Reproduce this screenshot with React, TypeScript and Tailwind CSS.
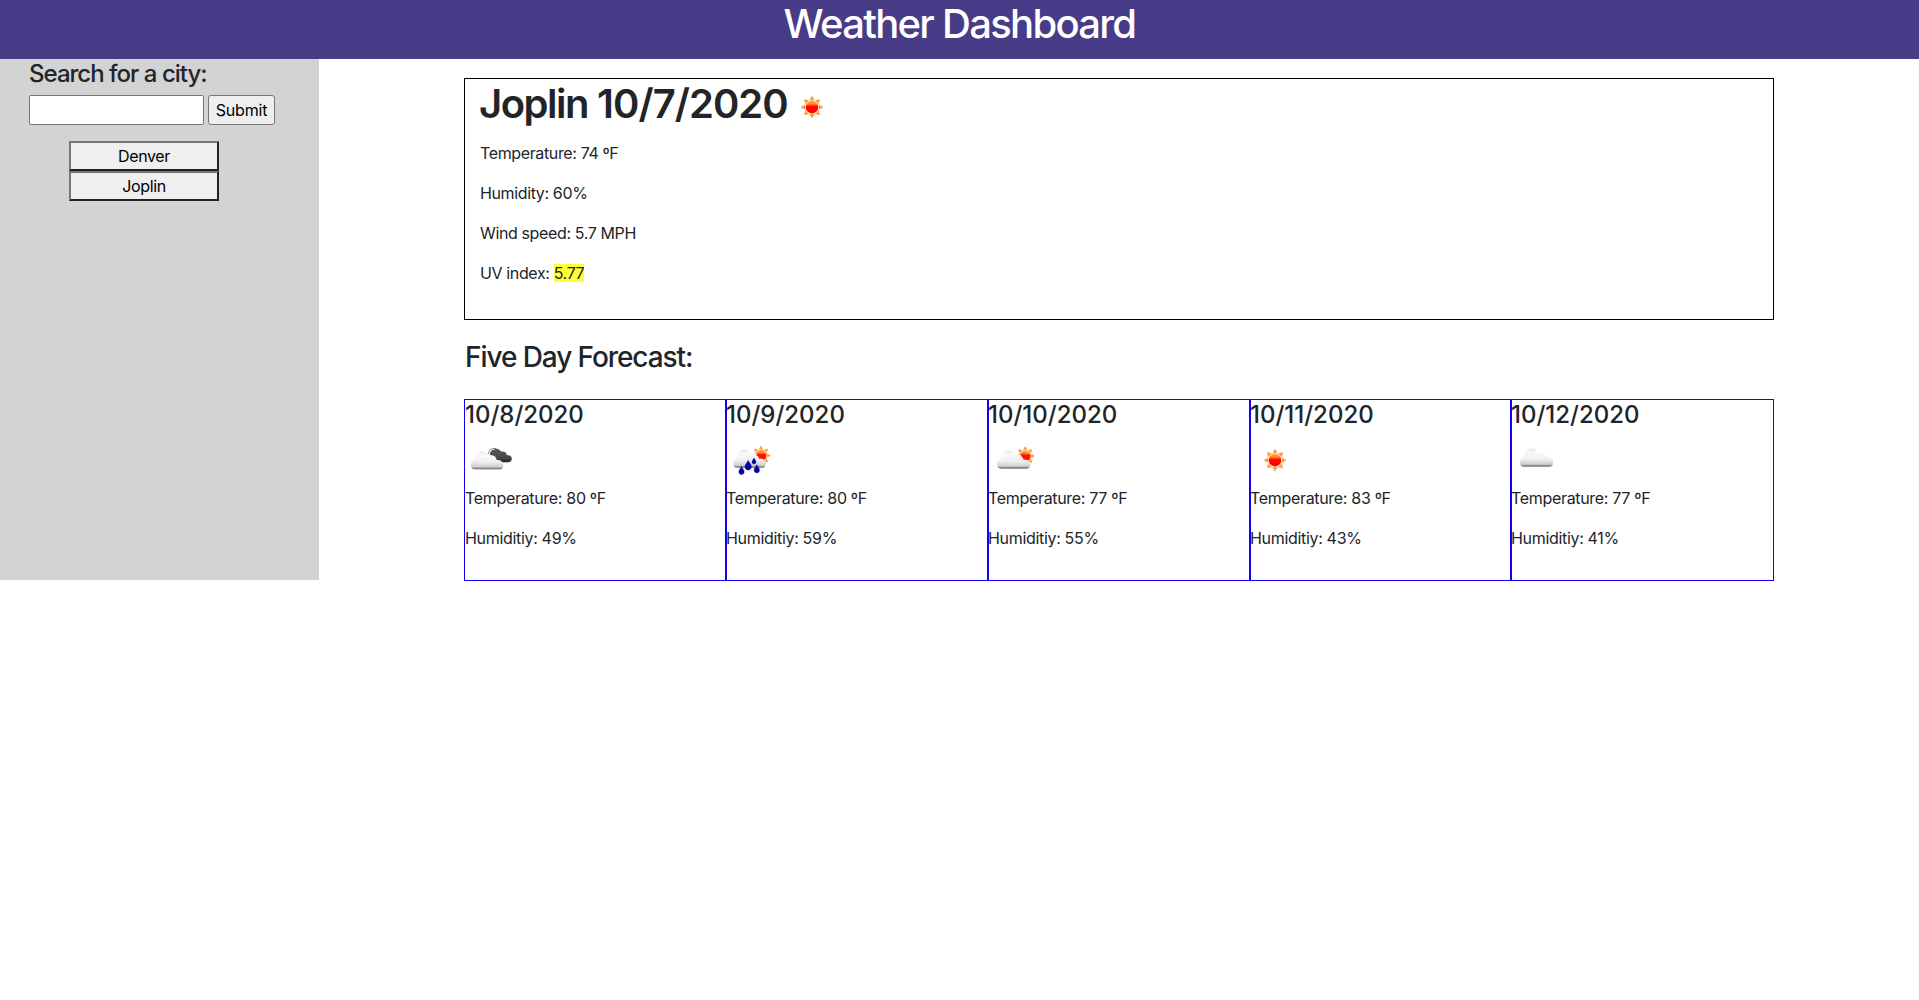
import React from 'react';

type IconKind = 'broken' | 'rain' | 'partly' | 'sun' | 'cloud';

function Sun({ x, y, r = 6 }: { x: number; y: number; r?: number }) {
  const k = r / 6;
  return (
    <g transform={`translate(${x} ${y}) scale(${k})`}>
      {[0, 45, 90, 135, 180, 225, 270, 315].map((a) => (
        <path key={a} d="M-2.7 -7.1 L0 -11.9 L2.7 -7.1Z" fill="#ff9d3c" transform={`rotate(${a})`} />
      ))}
      <circle r="7.1" fill="#ffd9a8" />
      <circle r="6.4" fill="url(#sunFill)" />
    </g>
  );
}

function Defs() {
  return (
    <svg className="absolute h-0 w-0" aria-hidden="true">
      <defs>
        <linearGradient id="sunFill" x1="0" y1="0" x2="0" y2="1">
          <stop offset="0" stopColor="#ff8a10" />
          <stop offset="0.15" stopColor="#ffa040" />
          <stop offset="0.34" stopColor="#ff5a10" />
          <stop offset="0.42" stopColor="#ff0800" />
          <stop offset="1" stopColor="#ff0000" />
        </linearGradient>
        <linearGradient id="cloudFill" x1="0" y1="0" x2="0" y2="1">
          <stop offset="0" stopColor="#e6e6e6" />
          <stop offset="0.2" stopColor="#fafafa" />
          <stop offset="0.6" stopColor="#eeeeee" />
          <stop offset="0.85" stopColor="#cfcfcf" />
          <stop offset="0.93" stopColor="#858585" />
          <stop offset="1" stopColor="#a0a0a0" />
        </linearGradient>
        <linearGradient id="darkFill" x1="0" y1="0" x2="0" y2="1">
          <stop offset="0" stopColor="#5a5a5a" />
          <stop offset="0.75" stopColor="#454545" />
          <stop offset="1" stopColor="#1c1c1c" />
        </linearGradient>
      </defs>
    </svg>
  );
}

const CLOUD =
  'M4.5 20 C1.8 20 0 18.2 0 15.2 C0 12 1.6 10.2 4 9.7 C4 3.8 6.8 .8 11 .8 C14.3 .8 16.4 2.4 17.6 5.2 C22.4 4.2 25.3 6 26 10 C30 9.6 32.6 12 32.6 15.4 C32.6 18.4 30.8 20 28.4 20Z';

function Drop({ x, y, s }: { x: number; y: number; s: number }) {
  return (
    <path
      transform={`translate(${x} ${y}) scale(${s})`}
      d="M0 -5 C1 -2.5 3.3 -.6 3.3 1.7 C3.3 3.8 1.8 5 0 5 C-1.8 5 -3.3 3.8 -3.3 1.7 C-3.3 -.6 -1 -2.5 0 -5Z"
      fill="#0000b4"
      stroke="#000060"
      strokeWidth=".6"
    />
  );
}

function WeatherIcon({ kind }: { kind: IconKind }) {
  return (
    <svg viewBox="0 0 50 50" className="block h-[50px] w-[50px]">
      {kind === 'sun' && <Sun x={24} y={23.2} r={5.8} />}
      {kind === 'broken' && (
        <>
          <path
            d="M24.5 17 C25 13 28 11.4 31 11.6 C34 11.8 35 13.6 36.4 14.8 C39.5 14 41.5 15.6 41.8 18 C44.8 18 46.8 19.4 46.8 21.8 C46.8 24 45.2 25.2 43 25.2 L32 25.2 Z"
            fill="url(#darkFill)"
          />
          <path d="M23.8 18 C24.4 14 26.5 12 29.5 12" fill="none" stroke="#f4f4f4" strokeWidth="1.5" />
          <path d="M23 17 C24 13 26.5 11 31 11.6" fill="none" stroke="#666" strokeWidth=".8" />
          <path transform="translate(5.8 13.4) scale(1 .96)" d={CLOUD} fill="url(#cloudFill)" />
        </>
      )}
      {kind === 'rain' && (
        <>
          <Sun x={34} y={18.4} r={5} />
          <path transform="translate(6.2 11.7) scale(1 .97)" d={CLOUD} fill="url(#cloudFill)" />
          <path d="M28.8 18 Q31.2 18.4 32.2 21.6 Q35.5 21.2 37.4 22 L39 18Z" fill="#ff1000" />
          <Drop x={21.2} y={28.2} s={0.95} />
          <Drop x={27} y={24} s={0.6} />
          <Drop x={14.5} y={33.4} s={0.8} />
          <Drop x={29.8} y={31.8} s={0.8} />
        </>
      )}
      {kind === 'partly' && (
        <>
          <Sun x={36.2} y={19} r={5} />
          <path transform="translate(8 12.6) scale(1.02 .97)" d={CLOUD} fill="url(#cloudFill)" />
          <path d="M31.2 19 Q34 19.4 34.6 22.6 Q37.5 22 39.6 23 L41 19Z" fill="#ff1000" />
        </>
      )}
      {kind === 'cloud' && <path transform="translate(8 10.8) scale(1.02 .96)" d={CLOUD} fill="url(#cloudFill)" />}
    </svg>
  );
}

const days: { date: string; icon: IconKind; temp: number; humidity: number }[] = [
  { date: '10/8/2020', icon: 'broken', temp: 80, humidity: 49 },
  { date: '10/9/2020', icon: 'rain', temp: 80, humidity: 59 },
  { date: '10/10/2020', icon: 'partly', temp: 77, humidity: 55 },
  { date: '10/11/2020', icon: 'sun', temp: 83, humidity: 43 },
  { date: '10/12/2020', icon: 'cloud', temp: 77, humidity: 41 },
];

export default function App() {
  return (
    <div className="min-h-[1000px] bg-white font-['Inter','Liberation_Sans',sans-serif] text-base leading-6 tracking-[-0.37px] text-[#212529]">
      <Defs />
      <header className="h-[59px] bg-[#483b87] text-center">
        <h1 className="text-[40px] leading-[48px] font-medium tracking-[-1.7px] text-white">Weather Dashboard</h1>
      </header>
      <div className="flex">
        <aside className="h-[521px] w-[319px] shrink-0 bg-[#d3d3d3] pl-[29px]">
          <h4 className="text-2xl leading-[29px] font-medium tracking-[-0.98px]">Search for a city:</h4>
          <div className="mt-[7px] flex gap-1">
            <input className="h-[30px] w-[175px] rounded-[2px] border border-[#767676] bg-white px-1" />
            <button className="h-[30px] w-[67px] rounded-[3px] border border-[#767676] bg-[#efefef] tracking-[-0.2px] text-black">
              Submit
            </button>
          </div>
          <div className="mt-4 ml-10 flex w-[150px] flex-col">
            {['Denver', 'Joplin'].map((city) => (
              <button
                key={city}
                className="h-[30px] border-2 border-t-[#767676] border-r-[#212121] border-b-[#212121] border-l-[#767676] bg-[#efefef] leading-[26px] text-black"
              >
                {city}
              </button>
            ))}
          </div>
        </aside>
        <main className="ml-[145px] w-[1310px]">
          <section className="mt-[19px] h-[242px] border border-black pl-[15px]">
            <div className="flex h-[62px] pt-px">
              <h1 className="-ml-px text-[40px] leading-[48px] font-semibold tracking-[-0.95px]">
                <span className="tracking-[-1.5px]">Joplin</span> 10/7/2020
              </h1>
              <div className="mt-1">
                <WeatherIcon kind="sun" />
              </div>
            </div>
            <div className="flex flex-col gap-4">
              <p>Temperature: 74 ºF</p>
              <p>Humidity: 60%</p>
              <p>Wind speed: 5.7 MPH</p>
              <p>
                UV index: <span className="inline-block bg-[#ffff38] leading-[18px]">5.77</span>
              </p>
            </div>
          </section>
          <h3 className="mt-5 ml-px text-[28px] leading-[34px] font-medium tracking-[-1.08px]">Five Day Forecast:</h3>
          <div className="mt-[25px] grid grid-cols-[262px_262px_262px_261px_263px]">
            {days.map((d) => (
              <article key={d.date} className="group h-[182px] border border-[#1400f5]">
                <h4 className="-ml-px text-2xl leading-[29px] font-medium tracking-[0px] group-first:ml-0">{d.date}</h4>
                <div className="mt-2">
                  <WeatherIcon kind={d.icon} />
                </div>
                <p className="-mt-px -ml-px tracking-[-0.32px] group-first:ml-0">Temperature: {d.temp} ºF</p>
                <p className="mt-4 -ml-px tracking-[-0.32px] group-first:ml-0">Humiditiy: {d.humidity}%</p>
              </article>
            ))}
          </div>
        </main>
      </div>
    </div>
  );
}
